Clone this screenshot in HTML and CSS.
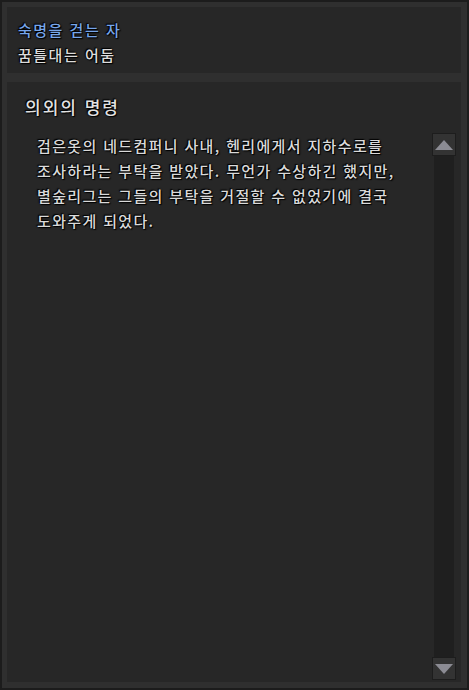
FILE: index.html
```html
<!DOCTYPE html>
<html lang="ko">
<head>
    <meta charset="UTF-8">
    <meta name="viewport" content="width=device-width, initial-scale=1.0">
    <title>quest</title>
    <link rel="stylesheet" href="styles.css">
</head>
<body>
    <div class="window">
        <div class="quest-head">
            <div class="quest-group">숙명을 걷는 자</div>
            <div class="quest-chapter">꿈틀대는 어둠</div>
        </div>
        <div class="quest-body">
            <div class="quest-title">의외의 명령</div>
            <div class="quest-row">
                <div class="quest-text">
                    검은옷의 네드컴퍼니 사내, 헨리에게서 지하수로를<br>
                    조사하라는 부탁을 받았다. 무언가 수상하긴 했지만,<br>
                    별숲리그는 그들의 부탁을 거절할 수 없었기에 결국<br>
                    도와주게 되었다.
                </div>
                <div class="scrollbar">
                    <div class="scroll-btn"><div class="arrow-up"></div></div>
                    <div class="scroll-track"></div>
                    <div class="scroll-btn"><div class="arrow-down"></div></div>
                </div>
            </div>
        </div>
    </div>
</body>
</html>
```

FILE: styles.css
```css
body{
    margin: 0;
    background-color: #1b1b1b;
    font-family: "Noto Sans CJK KR", "Noto Sans", sans-serif;
}
.window{
    width: 469px;
    height: 690px;
    box-sizing: border-box;
    border: 2px solid #1c1c1c;
    background-color: #2f2f2f;
    padding: 5px 6px 6px 5px;
    display: flex;
    flex-direction: column;
    gap: 9px;
}

/***************** -head- *******************/

.quest-head{
    background-color: #272727;
    padding: 10px 11px 6px 11px;
    font-size: 15px;
    line-height: 25px;
    font-weight: 500;
    letter-spacing: 1.5px;
    text-shadow: 0 0 2px #000, 1px 1px 1px #000, -1px -1px 1px #000;
}
.quest-group{
    color: #77a6ea;
}
.quest-chapter{
    color: #dcdcdc;
}

/***************** -body- *******************/

.quest-body{
    flex: 1;
    background-color: #272727;
    padding: 13px 5px 2px 18px;
    display: flex;
    flex-direction: column;
}
.quest-title{
    font-size: 17px;
    line-height: 24px;
    font-weight: 500;
    letter-spacing: 2px;
    color: #e2e2e2;
    text-shadow: 0 0 2px #000, 1px 1px 1px #000, -1px -1px 1px #000;
    margin-bottom: 14px;
}
.quest-row{
    flex: 1;
    display: flex;
}
.quest-text{
    flex: 1;
    margin-left: 12px;
    font-size: 15px;
    line-height: 25px;
    font-weight: 500;
    letter-spacing: 1.35px;
    color: #dadada;
    text-shadow: 0 0 2px #000, 1px 1px 1px #000, -1px -1px 1px #000;
    white-space: nowrap;
}

/***************** -scrollbar- *******************/

.scrollbar{
    width: 24px;
    display: flex;
    flex-direction: column;
    align-items: center;
}
.scroll-btn{
    width: 24px;
    height: 23px;
    box-sizing: border-box;
    border: 1px solid #1d1d1d;
    background-color: #333333;
    display: flex;
    align-items: center;
    justify-content: center;
}
.scroll-track{
    flex: 1;
    width: 20px;
    background-color: #1f1f1f;
}
.arrow-up{
    width: 0;
    height: 0;
    border-left: 9px solid transparent;
    border-right: 9px solid transparent;
    border-bottom: 10px solid #8c8c94;
}
.arrow-down{
    width: 0;
    height: 0;
    border-left: 9px solid transparent;
    border-right: 9px solid transparent;
    border-top: 10px solid #8c8c94;
}
```
